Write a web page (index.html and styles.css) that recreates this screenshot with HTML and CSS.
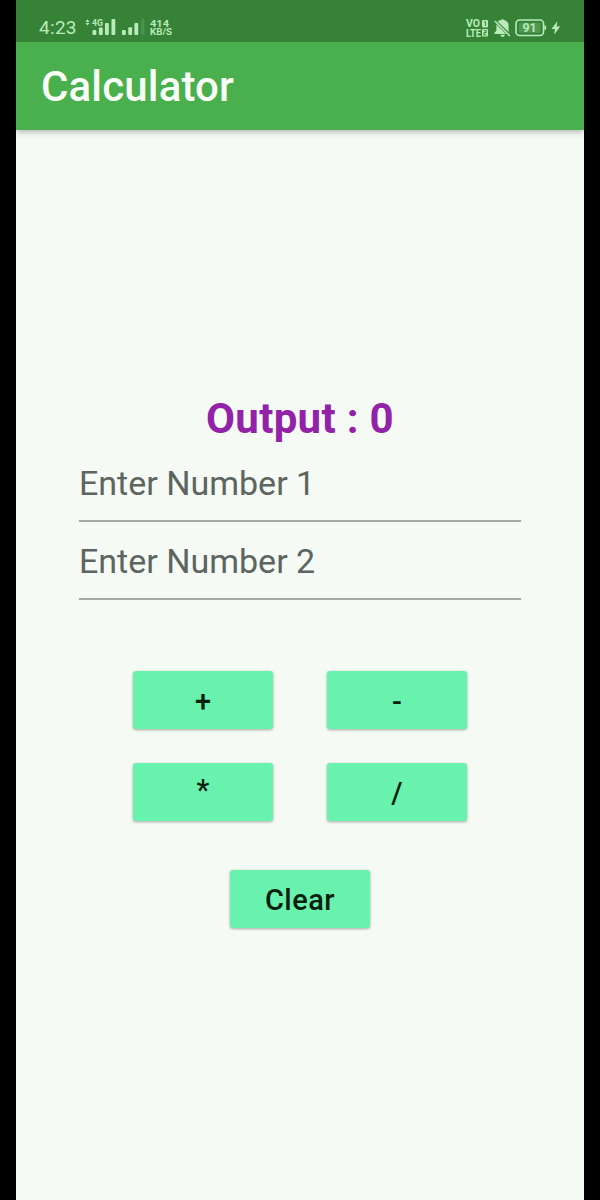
FILE: index.html
```html
<!DOCTYPE html>
<html lang="en">
<head>
<meta charset="utf-8">
<title>Calculator</title>
<link rel="stylesheet" href="styles.css">
</head>
<body>
<div class="phone">
  <div class="status">
    <span class="time">4:23</span>
    <svg class="signals" width="62" height="20" viewBox="0 0 62 20" fill="currentColor">
      <path d="M2.5 1.2 4.5 4H.5zM2.5 7.4 4.5 4.9H.5z"/>
      <text class="net" x="7" y="7.6" textLength="11" lengthAdjust="spacingAndGlyphs">4G</text>
      <rect x="7.5" y="12" width="3.8" height="5" rx="1"/><rect x="13.9" y="9.5" width="3.8" height="7.5" rx="1"/><rect x="20" y="5" width="3.8" height="12" rx="1"/><rect x="26.5" y="1" width="3.8" height="16" rx="1"/>
      <rect x="37" y="12" width="3.8" height="5" rx="1"/><rect x="43.3" y="9.3" width="3.8" height="7.7" rx="1"/><rect x="49.4" y="5" width="3.8" height="12" rx="1"/><rect x="56" y="1" width="3.5" height="16" rx="1" opacity=".15"/>
    </svg>
    <svg class="speed" width="24" height="20" viewBox="0 0 24 20" fill="currentColor">
      <text x="0" y="8.6" textLength="19" lengthAdjust="spacingAndGlyphs">414</text>
      <text x="0" y="17" textLength="22" lengthAdjust="spacingAndGlyphs">KB/S</text>
    </svg>
    <svg class="volte" width="24" height="20" viewBox="0 0 24 20" fill="currentColor">
      <text x="0" y="8.8" textLength="14" lengthAdjust="spacingAndGlyphs">VO</text>
      <text x="0" y="18.5" textLength="15" lengthAdjust="spacingAndGlyphs">LTE</text>
      <rect x="16" y="2" width="6" height="7.5" rx="1"/><rect x="16" y="11" width="6" height="7.5" rx="1"/>
      <path class="cut" d="M18 3.8h1.5v4M17.7 12.6h2.5v2h-2.3v2.2h2.5"/>
    </svg>
    <svg class="bell" width="17" height="20" viewBox="0 0 17 20" fill="currentColor">
      <path d="M3.6 2.6Q5.2 1.4 7.2 1.1 7.6.2 8.6.2t1.4.9q4.6 1.2 4.6 6v5l1.2 1.8zM2.4 5.4 12 15H.6v-1.4l1.8-1.8zM6.3 15.8h4.6q-.5 2.2-2.3 2.2t-2.3-2.2z"/>
      <path class="slash" d="M.8 2 15.8 17"/>
    </svg>
    <svg class="battery" width="32" height="18" viewBox="0 0 32 18">
      <rect class="case" x="1" y="1" width="27.5" height="15.5" rx="3.5"/>
      <rect x="4" y="3.8" width="21.5" height="9.9" rx="1" fill="currentColor" opacity=".2"/>
      <path d="M29.3 6q2 0 2 2.5t-2 2.5z" fill="currentColor"/>
      <text x="14.6" y="13.2" text-anchor="middle" fill="currentColor">91</text>
    </svg>
    <svg class="bolt" width="10" height="14" viewBox="0 0 10 14" fill="currentColor"><path d="M6.3.3.5 8h3.4L3.2 13.5 9.2 5.5H5.7z"/></svg>
  </div>
  <header class="appbar"><h1>Calculator</h1></header>
  <main class="content">
    <h2 class="output">Output : 0</h2>
    <div class="field">Enter Number 1</div>
    <div class="field">Enter Number 2</div>
    <div class="keys">
      <button class="key">+</button>
      <button class="key minus">-</button>
      <button class="key star">*</button>
      <button class="key">/</button>
    </div>
    <button class="key clear">Clear</button>
  </main>
</div>
</body>
</html>
```
FILE: styles.css
```css
* { box-sizing: border-box; }
body {
  margin: 0;
  background: #000;
  font-family: Roboto, sans-serif;
}
.phone {
  display: flex;
  flex-direction: column;
  width: 568px;
  height: 1200px;
  margin: 0 auto;
  background: #f5faf4;
}
.status {
  display: flex;
  align-items: flex-start;
  height: 42px;
  padding: 18px 23px 0;
  background: #368338;
  color: #b9eab9;
}
.time {
  width: 46px;
  font-size: 19px;
  line-height: 20px;
  letter-spacing: .3px;
}
.net { font-size: 9px; font-weight: 700; }
.signals { flex: none; margin-right: 3px; }
.speed { font-size: 9px; font-weight: 700; }
.volte { margin-left: auto; font-size: 10px; font-weight: 700; }
.cut { fill: none; stroke: #368338; stroke-width: 1; }
.bell { margin-left: 4px; margin-top: 1px; }
.slash { fill: none; stroke: currentColor; stroke-width: 1.6; }
.battery { margin-left: 4px; margin-top: 1px; font-size: 12.5px; font-weight: 700; }
.case { fill: none; stroke: currentColor; stroke-width: 1.6; }
.bolt { margin: 3px 0 0 4px; }
.appbar {
  display: flex;
  align-items: center;
  height: 88px;
  padding: 2px 0 0 25px;
  background: #4aaf4d;
  box-shadow: 0 1px 7px rgba(0, 0, 0, .35);
  clip-path: inset(0 0 -14px 0);
  color: #f8fff6;
}
h1 {
  margin: 0;
  font-size: 42px;
  font-weight: 500;
  line-height: 50px;
  letter-spacing: .15px;
}
.content {
  display: flex;
  flex-direction: column;
  align-items: center;
  padding: 264px 63px 0;
}
.output {
  margin: 0;
  color: #9222a8;
  font-size: 42px;
  font-weight: 700;
  line-height: 50px;
  letter-spacing: .3px;
}
.field {
  width: 442px;
  height: 78px;
  padding-top: 19px;
  border-bottom: 2px solid #a5aaa5;
  color: #5d6560;
  font-size: 34px;
  line-height: 40px;
}
.keys {
  display: grid;
  grid-template-columns: 140px 140px;
  gap: 34px 54px;
  margin-top: 71px;
}
.key {
  width: 140px;
  height: 58px;
  padding: 0;
  border: 0;
  border-radius: 3px;
  background: #68f2ad;
  box-shadow: 0 1px 3px rgba(0, 0, 0, .32);
  color: #08200f;
  font: 500 29px/40px Roboto, sans-serif;
}
.key { padding-top: 2px; }
.minus { padding-top: 4px; }
.star { padding: 0 0 4px; }
.clear { margin-top: 49px; letter-spacing: .5px; }
```
